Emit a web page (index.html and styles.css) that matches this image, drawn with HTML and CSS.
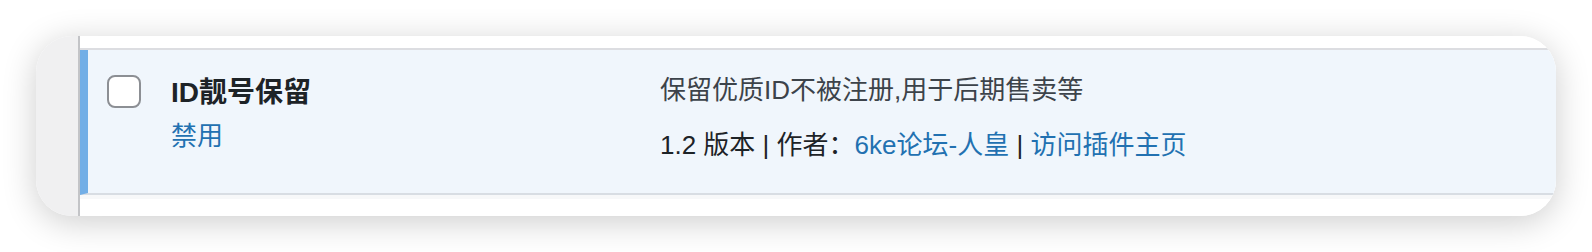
FILE: index.html
```html
<!DOCTYPE html>
<html lang="zh-CN">
<head>
<meta charset="utf-8">
<title>插件</title>
<link rel="stylesheet" href="styles.css">
</head>
<body>
<div class="card">
  <div class="side"></div>
  <div class="table">
    <div class="head-strip"></div>
    <div class="row active">
      <div class="check-cell"><span class="checkbox"></span></div>
      <div class="title-cell">
        <strong class="plugin-name">ID靓号保留</strong>
        <a class="link" href="#">禁用</a>
      </div>
      <div class="desc-cell">
        <p class="desc">保留优质ID不被注册,用于后期售卖等</p>
        <div class="meta">1.2 版本 | 作者：<a class="link" href="#">6ke论坛-人皇</a> | <a class="link" href="#">访问插件主页</a></div>
      </div>
    </div>
    <div class="foot-strip"></div>
  </div>
</div>
</body>
</html>
```

FILE: styles.css
```css
html, body {
  margin: 0;
  padding: 0;
  background: #ffffff;
}
body {
  width: 1592px;
  height: 252px;
  overflow: hidden;
  font-family: "Liberation Sans", "Noto Sans CJK SC", sans-serif;
}
.card {
  margin: 36px 0 0 36px;
  width: 1520px;
  height: 180px;
  border-radius: 36px;
  overflow: hidden;
  display: flex;
  background: #ffffff;
  box-shadow: 0 6px 34px rgba(0, 0, 0, 0.2);
}
.side {
  width: 42px;
  flex: none;
  background: #f0f0f1;
  border-right: 2px solid #c3c4c7;
}
.table {
  flex: 1;
  display: flex;
  flex-direction: column;
  background: #ffffff;
}
.head-strip {
  height: 12px;
  border-bottom: 2px solid #dcdde1;
}
.row {
  height: 143px;
  display: flex;
  background: #f0f6fc;
  border-left: 8px solid #72aee6;
  border-bottom: 2px solid #d8dde3;
  box-sizing: content-box;
}
.foot-strip {
  height: 4px;
  background: #f7f8f9;
}
.check-cell {
  width: 83px;
  flex: none;
  padding: 25px 0 0 19px;
  box-sizing: border-box;
}
.checkbox {
  display: block;
  width: 34px;
  height: 33px;
  box-sizing: border-box;
  border: 2px solid #8c8f94;
  border-radius: 8px;
  background: #ffffff;
}
.title-cell {
  width: 489px;
  flex: none;
  padding-top: 23px;
  display: flex;
  flex-direction: column;
  align-items: flex-start;
}
.plugin-name {
  font-size: 28px;
  line-height: 40px;
  font-weight: 700;
  color: #1d2327;
}
.title-cell .link {
  margin-top: 5px;
  font-size: 26px;
  line-height: 36px;
}
.link {
  color: #2271b1;
  text-decoration: none;
}
.desc-cell {
  flex: 1;
  padding-top: 22px;
  font-size: 26px;
  line-height: 36px;
}
.desc {
  margin: 0;
  color: #3c434a;
}
.meta {
  margin-top: 19px;
  color: #1d2327;
}
```
